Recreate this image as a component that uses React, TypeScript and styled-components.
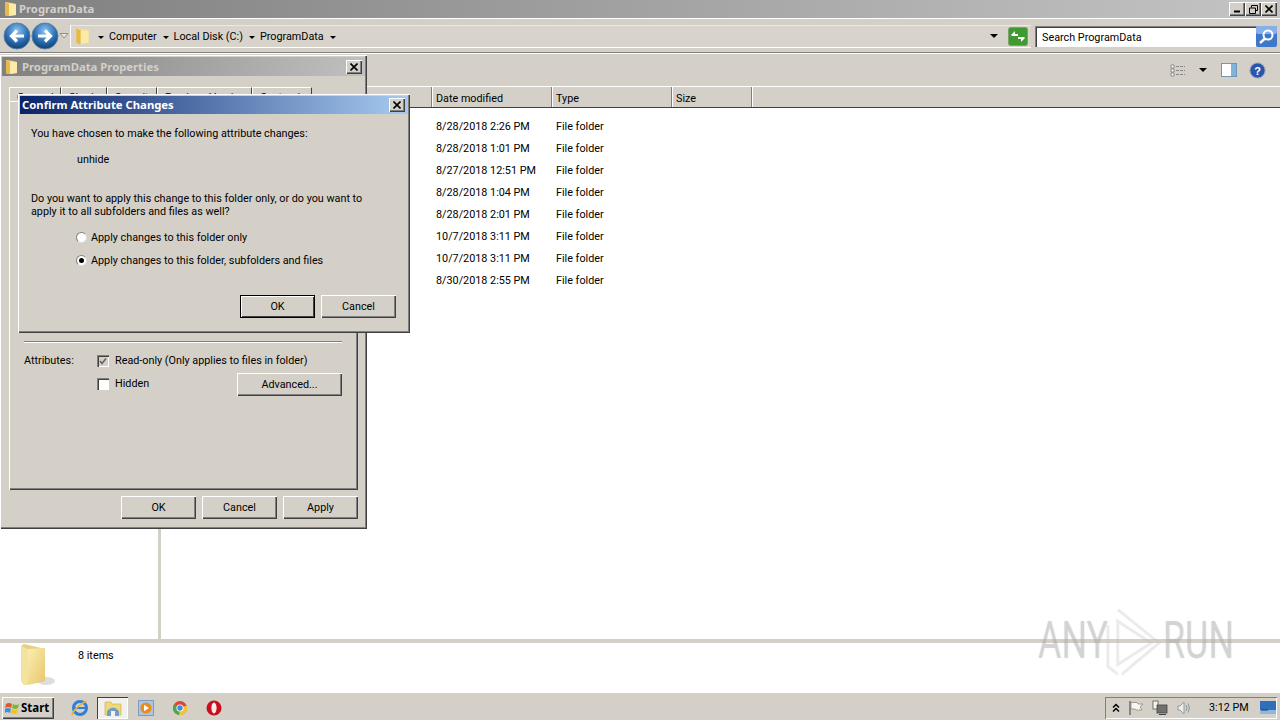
import { createGlobalStyle, css, styled } from "styled-components";

const GlobalStyle = createGlobalStyle`
  html, body {
    margin: 0;
    padding: 0;
    background: #fff;
  }
  * {
    box-sizing: border-box;
  }
`;

const face = "#d4d0c8";

const raised = css`
  background: ${face};
  box-shadow: inset 1px 1px 0 #fff, inset -1px -1px 0 #404040, inset -2px -2px 0 #808080;
`;

const sunken = css`
  box-shadow: inset 1px 1px 0 #808080, inset -1px -1px 0 #fff;
`;

const Page = styled.div`
  position: relative;
  width: 1280px;
  height: 720px;
  overflow: hidden;
  display: flex;
  flex-direction: column;
  background: #fff;
  color: #000;
  font: 10.8px/14px "Roboto", "Noto Sans", sans-serif;
`;

const TitleBar = styled.div`
  height: 18px;
  flex: none;
  display: flex;
  align-items: center;
  padding: 0 3px 0 3px;
  background: linear-gradient(90deg, #808080, #c4c4c4);
`;

const TitleText = styled.span<{ $light?: boolean }>`
  font-family: "Noto Sans", sans-serif;
  font-weight: 700;
  font-size: 11.3px;
  color: ${(p) => (p.$light ? "#fff" : face)};
  flex: 1;
  white-space: nowrap;
`;

const CaptionButton = styled.div`
  ${raised}
  width: 16px;
  height: 14px;
  display: flex;
  align-items: center;
  justify-content: center;
  flex: none;
`;

const CaptionGroup = styled.div`
  display: flex;
  align-items: center;
`;

const NavBar = styled.div`
  height: 36px;
  flex: none;
  display: flex;
  align-items: center;
  padding: 0 0 0 3px;
  background: ${face};
  border-top: 1px solid #fff;
  border-bottom: 1px solid #fff;
  box-shadow: inset 0 -1px 0 #808080;
`;

const AddressBox = styled.div`
  width: 961px;
  height: 23px;
  margin-left: 1px;
  display: flex;
  align-items: center;
  padding-left: 3px;
  background: #d8d4cc;
  border-left: 1px solid #fff;
  border-top: 1px solid #ece9e2;
  border-bottom: 1px solid #fff;
`;

const AddressFolder = styled.span`
  display: flex;
  width: 18px;
`;

const Crumb = styled.span`
  display: flex;
  align-items: center;
  gap: 5px;
  margin-left: 6px;
  padding-top: 2px;
  white-space: nowrap;
`;

const Caret = styled.span<{ $big?: boolean }>`
  width: 0;
  height: 0;
  border-left: ${(p) => (p.$big ? 4 : 3)}px solid transparent;
  border-right: ${(p) => (p.$big ? 4 : 3)}px solid transparent;
  border-top: ${(p) => (p.$big ? 4 : 3)}px solid #000;
  flex: none;
`;

const AddressEnd = styled.div`
  margin-left: auto;
  padding-right: 3px;
  display: flex;
  align-items: center;
  gap: 10px;
`;

const SearchBox = styled.div`
  width: 221px;
  height: 21px;
  margin-left: 4px;
  padding: 3px 0 0 7px;
  display: flex;
  align-items: center;
  background: #fff;
  box-shadow: inset 1px 1px 0 #808080, inset 2px 2px 0 #404040;
  white-space: nowrap;
`;

const CommandBar = styled.div`
  height: 32px;
  flex: none;
  display: flex;
  align-items: center;
  justify-content: flex-end;
  padding-right: 14px;
  background: ${face};
`;

const CommandItem = styled.span<{ $gap: number }>`
  display: flex;
  margin-left: ${(p) => p.$gap}px;
`;

const HeaderRow = styled.div`
  height: 22px;
  flex: none;
  display: grid;
  grid-template-columns: 161px 270px 120px 120px 80px 1fr;
  background: ${face};
  border-top: 1px solid #fff;
  border-bottom: 1px solid #404040;
`;

const HeaderCell = styled.div`
  display: flex;
  align-items: center;
  padding: 4px 0 0 4px;
  border-left: 1px solid #808080;
  box-shadow: inset 1px 0 0 #fff;
`;

const Panes = styled.div`
  flex: 1;
  min-height: 0;
  display: flex;
`;

const TreePane = styled.div`
  width: 161px;
  flex: none;
  background: #fff;
  border-right: 3px solid ${face};
`;

const FileList = styled.div`
  flex: 1;
  display: flex;
  flex-direction: column;
  padding-top: 7px;
`;

const FileRow = styled.div`
  height: 22px;
  padding-top: 2px;
  display: grid;
  grid-template-columns: 275px 120px 1fr;
  align-items: center;
`;

const StatusBar = styled.div`
  height: 53px;
  flex: none;
  display: flex;
  padding: 0 0 0 18px;
  background: #fff;
  border-top: 4px solid ${face};
`;

const StatusText = styled.span`
  margin: 6px 0 0 20px;
`;

const Taskbar = styled.div`
  height: 28px;
  flex: none;
  display: flex;
  align-items: center;
  padding: 2px 3px 0 2px;
  background: ${face};
  border-top: 1px solid #fff;
`;

const StartButton = styled.div`
  ${raised}
  width: 52px;
  height: 22px;
  display: flex;
  align-items: center;
  padding-left: 3px;
  gap: 1px;
  font-family: "Noto Sans", sans-serif;
  font-weight: 700;
  font-size: 11.5px;
`;

const TaskIcons = styled.div`
  margin-left: 8px;
  display: flex;
  align-items: center;
`;

const TaskSlot = styled.div<{ $active?: boolean; $w?: number }>`
  width: ${(p) => p.$w ?? 32}px;
  height: 22px;
  margin-left: 2px;
  display: flex;
  align-items: center;
  justify-content: center;
  ${(p) =>
    p.$active &&
    css`
      background: #f2f0ec;
      box-shadow: inset 1px 1px 0 #404040, inset -1px -1px 0 #fff;
    `}
`;

const Tray = styled.div`
  margin-left: auto;
  width: 172px;
  height: 22px;
  display: flex;
  align-items: center;
  padding: 0 1px 0 7px;
  ${sunken}
`;

const TrayIcons = styled.div`
  display: flex;
  align-items: center;
  gap: 8px;
`;

const Clock = styled.span`
  margin-left: 17px;
  white-space: nowrap;
`;

const DesktopSlot = styled.span`
  margin-left: auto;
  display: flex;
`;

const Dialog = styled.div<{ $x: number; $y: number; $w: number; $h: number }>`
  position: absolute;
  left: ${(p) => p.$x}px;
  top: ${(p) => p.$y}px;
  width: ${(p) => p.$w}px;
  height: ${(p) => p.$h}px;
  padding: 2px;
  display: flex;
  flex-direction: column;
  background: ${face};
  box-shadow: inset 1px 1px 0 #fff, inset -1px -1px 0 #404040, inset -2px -2px 0 #808080;
`;

const DialogTitle = styled.div<{ $active?: boolean; $h: number }>`
  height: ${(p) => p.$h}px;
  flex: none;
  display: flex;
  align-items: center;
  padding: 0 3px 0 2px;
  gap: 2px;
  background: ${(p) =>
    p.$active
      ? "linear-gradient(90deg, #0a246a, #a6caf0)"
      : "linear-gradient(90deg, #808080, #c0c0c0)"};
`;

const Tabs = styled.div`
  display: flex;
  margin: 11px 0 0 7px;
  height: 20px;
  flex: none;
`;

const Tab = styled.div<{ $w: number }>`
  width: ${(p) => p.$w}px;
  padding: 3px 0 0 7px;
  white-space: nowrap;
  border-top: 1px solid #fff;
  border-left: 1px solid #fff;
  border-right: 1px solid #404040;
`;

const TabPanel = styled.div`
  height: 389px;
  margin: -6px 7px 0 7px;
  display: flex;
  flex-direction: column;
  justify-content: flex-end;
  padding: 0 16px 95px 15px;
  box-shadow: inset 1px 1px 0 #fff, inset -1px -1px 0 #404040, inset -2px -2px 0 #808080;
`;

const Rule = styled.div`
  height: 2px;
  border-top: 1px solid #808080;
  border-bottom: 1px solid #fff;
  margin-bottom: 6px;
`;

const AttrGrid = styled.div`
  display: grid;
  grid-template-columns: 73px 1fr;
  grid-auto-rows: 23px;
  align-items: center;
`;

const AttrLine = styled.div`
  display: flex;
  align-items: center;
  gap: 6px;
  white-space: nowrap;
`;

const CheckBox = styled.span<{ $checked?: boolean }>`
  width: 12px;
  height: 12px;
  flex: none;
  display: flex;
  align-items: center;
  justify-content: center;
  background: ${(p) => (p.$checked ? face : "#fff")};
  box-shadow: inset 1px 1px 0 #808080, inset 2px 2px 0 #404040, inset -1px -1px 0 #fff;
`;

const PushButton = styled.div<{ $w?: number; $default?: boolean }>`
  ${raised}
  width: ${(p) => p.$w ?? 75}px;
  height: 23px;
  display: flex;
  align-items: center;
  justify-content: center;
  flex: none;
  ${(p) =>
    p.$default &&
    css`
      outline: 1px solid #000;
      outline-offset: -1px;
      box-shadow: inset 2px 2px 0 #fff, inset -2px -2px 0 #404040;
    `}
`;

const AdvancedButton = styled(PushButton)`
  margin: 2px 0 0 auto;
`;

const DialogButtons = styled.div`
  display: flex;
  justify-content: flex-end;
  gap: 6px;
  margin-top: 6px;
  padding-right: 7px;
`;

const ConfirmBody = styled.div`
  flex: 1;
  display: flex;
  flex-direction: column;
  padding: 13px 12px 0 11px;
`;

const Para = styled.p<{ $indent?: number; $top?: number }>`
  margin: ${(p) => p.$top ?? 0}px 0 0 ${(p) => p.$indent ?? 0}px;
  line-height: 13px;
  white-space: nowrap;
`;

const RadioLine = styled.div<{ $top: number }>`
  display: flex;
  align-items: center;
  gap: 4px;
  margin: ${(p) => p.$top}px 0 0 45px;
  white-space: nowrap;
`;

const Radio = styled.span<{ $on?: boolean }>`
  width: 11px;
  height: 11px;
  margin-top: -2px;
  flex: none;
  border-radius: 50%;
  background: #fff;
  border: 1px solid #808080;
  border-right-color: #ddd;
  border-bottom-color: #ddd;
  display: flex;
  align-items: center;
  justify-content: center;
  &::after {
    content: "";
    width: 5px;
    height: 5px;
    border-radius: 50%;
    background: ${(p) => (p.$on ? "#000" : "transparent")};
  }
`;

const ConfirmButtons = styled.div`
  display: flex;
  justify-content: flex-end;
  gap: 6px;
  margin-top: 27px;
`;

const Watermark = styled.div`
  position: absolute;
  left: 1038px;
  top: 606px;
  width: 192px;
  height: 70px;
  display: flex;
  align-items: center;
  justify-content: space-between;
  font: 400 52px/1 "Roboto", sans-serif;
  color: rgba(190, 190, 190, 0.26);
  pointer-events: none;
`;

const WaterWord = styled.span<{ $w: number }>`
  display: inline-block;
  width: ${(p) => p.$w}px;
  transform: scaleX(0.69);
  transform-origin: left center;
  white-space: nowrap;
  text-shadow: 0 0 1px rgba(150, 150, 150, 0.35);
`;

const Folder = ({ size = 16 }: { size?: number }) => (
  <svg width={size} height={size} viewBox="0 0 16 16">
    <path d="M2 1 L9 2 L13 3 L13 14 L4 15 L2 14Z" fill="#f6dc8a" />
    <path d="M2 1 L6 3 L6 15 L4 15 L2 14Z" fill="#e6b94a" />
    <path d="M6 3 L13 3 L13 14 L6 15Z" fill="#fbeaa8" />
  </svg>
);

const BigFolder = () => (
  <svg width="40" height="48" viewBox="0 0 40 48">
    <defs>
      <linearGradient id="fold" x1="0" x2="1" y1="0" y2="1">
        <stop offset="0" stopColor="#fbeeb0" />
        <stop offset="1" stopColor="#e7c66c" />
      </linearGradient>
    </defs>
    <ellipse cx="28" cy="38" rx="9" ry="4" fill="#ddd" />
    <path d="M3 3 L6 1 L27 6 L27 38 L6 42 L3 38Z" fill="#e9cf7c" />
    <path d="M10 6 L27 5 L27 38 L10 42Z" fill="url(#fold)" />
    <path d="M3 3 L10 6 L10 42 L6 42 L3 38Z" fill="#f4e2a0" />
  </svg>
);

const CloseGlyph = () => (
  <svg width="8" height="8" viewBox="0 0 8 8">
    <path d="M0.5 0.5 L7.5 7.5 M7.5 0.5 L0.5 7.5" stroke="#000" strokeWidth="1.6" />
  </svg>
);

const NavArrow = ({ left }: { left?: boolean }) => (
  <svg width="28" height="28" viewBox="0 0 28 28">
    <defs>
      <radialGradient id={left ? "navl" : "navr"} cx="50%" cy="30%" r="70%">
        <stop offset="0" stopColor="#8fc4ee" />
        <stop offset="0.6" stopColor="#2a6fb6" />
        <stop offset="1" stopColor="#10406f" />
      </radialGradient>
    </defs>
    <circle cx="14" cy="14" r="13" fill={`url(#${left ? "navl" : "navr"})`} stroke="#5b7f9f" />
    <path
      d={left ? "M21 14 H9 M14 8.5 L8.5 14 L14 19.5" : "M7 14 H19 M14 8.5 L19.5 14 L14 19.5"}
      fill="none"
      stroke="#fff"
      strokeWidth="3.2"
    />
  </svg>
);

const Refresh = () => (
  <svg width="20" height="19" viewBox="0 0 20 19">
    <rect x="0.5" y="0.5" width="19" height="18" rx="2" fill="#3f9b2f" stroke="#7f9f6f" />
    <path d="M3 8 L7 4 L7 7 H10 V9 H4Z M17 11 L13 15 L13 12 H10 V10 H16Z" fill="#fff" />
  </svg>
);

const SearchIcon = () => (
  <svg width="21" height="21" viewBox="0 0 21 21">
    <rect width="21" height="21" rx="2" fill="#3f78c8" />
    <rect width="21" height="8" rx="2" fill="#86b0ea" />
    <circle cx="12" cy="9" r="4.5" fill="none" stroke="#fff" strokeWidth="2" />
    <path d="M9 12.5 L4 17" stroke="#fff" strokeWidth="2.4" />
  </svg>
);

const ViewsIcon = () => (
  <svg width="16" height="13" viewBox="0 0 16 13">
    <path d="M1 1h3v3H1z M1 5h3v3H1z M1 9h3v3H1z" fill="#fff" stroke="#777" strokeWidth="0.8" />
    <path d="M6 2.5h9 M6 6.5h9 M6 10.5h9" stroke="#888" strokeDasharray="3 1" />
  </svg>
);

const PreviewIcon = () => (
  <svg width="16" height="14" viewBox="0 0 16 14">
    <rect x="0.5" y="0.5" width="15" height="13" fill="#fff" stroke="#6f96b8" />
    <rect x="10" y="1" width="5" height="12" fill="#7fb4d8" />
  </svg>
);

const HelpIcon = () => (
  <svg width="17" height="17" viewBox="0 0 17 17">
    <circle cx="8.5" cy="8.5" r="7.6" fill="#2a55ad" stroke="#9aa5bd" />
    <text x="8.5" y="12.5" textAnchor="middle" fontSize="11" fontWeight="700" fontFamily="Liberation Sans" fill="#fff">
      ?
    </text>
  </svg>
);

const WinFlag = () => (
  <svg width="15" height="14" viewBox="0 0 15 14">
    <path d="M1 3 Q4 1 7 3 L6 7 Q3 5 0 7Z" fill="#e2562c" />
    <path d="M8 3 Q11 5 14 3 L13 7 Q10 9 7 7Z" fill="#7cb82f" />
    <path d="M0 8 Q3 6 6 8 L5 12 Q2 10 0 12Z" fill="#3f8fdc" />
    <path d="M7 8 Q10 10 13 8 L12 12 Q9 14 6 12Z" fill="#f2c31e" />
  </svg>
);

const IeIcon = () => (
  <svg width="18" height="18" viewBox="0 0 18 18">
    <circle cx="9" cy="9" r="6.5" fill="none" stroke="#2f7fd6" strokeWidth="3" />
    <path d="M3 9 H15" stroke="#2f7fd6" strokeWidth="2" />
    <path d="M1 16 Q2 10 15 2" fill="none" stroke="#e3b23a" strokeWidth="1.6" />
  </svg>
);

const ExplorerIcon = () => (
  <svg width="20" height="18" viewBox="0 0 20 18">
    <path d="M2 3 H8 L9 5 H18 V16 H2Z" fill="#f0d77c" stroke="#c4a84f" strokeWidth="0.6" />
    <path d="M4 12 Q10 5 16 12 V17 H4Z" fill="#6f9fc4" />
    <rect x="8" y="12" width="4" height="5" fill="#f4f4f4" />
  </svg>
);

const PlayerIcon = () => (
  <svg width="16" height="16" viewBox="0 0 16 16">
    <rect x="0.5" y="0.5" width="15" height="15" fill="#a9c6e6" stroke="#7f9cc0" />
    <circle cx="8" cy="8" r="5.6" fill="#ee8a1c" />
    <path d="M6 4.8 L11 8 L6 11.2Z" fill="#fff" />
  </svg>
);

const ChromeIcon = () => (
  <svg width="16" height="16" viewBox="0 0 16 16">
    <circle cx="8" cy="8" r="7" fill="#d84a38" />
    <path d="M8 8 L2 4.5 A7 7 0 0 0 7 15Z" fill="#4aa84f" />
    <path d="M8 8 L7 15 A7 7 0 0 0 14.8 5.6Z" fill="#f3c52f" />
    <circle cx="8" cy="8" r="3.6" fill="#fff" />
    <circle cx="8" cy="8" r="2.7" fill="#4a86d8" />
  </svg>
);

const OperaIcon = () => (
  <svg width="16" height="16" viewBox="0 0 16 16">
    <circle cx="8" cy="8" r="7.5" fill="#c8101c" />
    <ellipse cx="8" cy="8" rx="2.6" ry="5.4" fill="#fbeaea" />
  </svg>
);

const Chevrons = () => (
  <svg width="8" height="10" viewBox="0 0 8 10">
    <path d="M1 4.5 L4 1.5 L7 4.5 M1 8.5 L4 5.5 L7 8.5" fill="none" stroke="#000" strokeWidth="1.5" />
  </svg>
);

const FlagTray = () => (
  <svg width="16" height="16" viewBox="0 0 16 16">
    <path d="M2 1 V15" stroke="#555" strokeWidth="1.2" />
    <path d="M3 2.5 H9 L10 4 H15 L12 7 L14 10 H8 L7 9 H3Z" fill="#f6f6f2" stroke="#8a8a84" strokeWidth="0.8" />
  </svg>
);

const NetworkTray = () => (
  <svg width="16" height="16" viewBox="0 0 16 16">
    <rect x="1" y="1" width="5" height="8" fill="#f4f4f0" stroke="#555" strokeWidth="0.8" />
    <rect x="5" y="5" width="10" height="8" fill="#707070" stroke="#444" strokeWidth="0.8" />
    <path d="M7 14.5 H14" stroke="#444" />
  </svg>
);

const SpeakerTray = () => (
  <svg width="16" height="16" viewBox="0 0 16 16">
    <path d="M2 6 H4 L8 2 V14 L4 10 H2Z" fill="#eeeeea" stroke="#888" strokeWidth="0.8" />
    <path d="M10 5 Q12 8 10 11 M12 3.5 Q15 8 12 12.5" fill="none" stroke="#8a98a8" />
  </svg>
);

const ShowDesktop = () => (
  <svg width="16" height="13" viewBox="0 0 16 13">
    <rect width="16" height="13" fill="#2f6fb8" />
    <rect y="9" width="16" height="4" fill="#8fb6de" />
    <path d="M1 9 H8" stroke="#1a3f70" />
  </svg>
);

const PlayMark = () => (
  <svg width="60" height="76" viewBox="0 0 60 76" fill="none" stroke="rgba(190,190,190,0.3)" strokeWidth="3">
    <path d="M14 18 L14 62 L48 40Z M4 22 L4 64 L14 72 M14 6 L56 40 L18 72" />
  </svg>
);

const files = [
  ["8/28/2018 2:26 PM", "File folder"],
  ["8/28/2018 1:01 PM", "File folder"],
  ["8/27/2018 12:51 PM", "File folder"],
  ["8/28/2018 1:04 PM", "File folder"],
  ["8/28/2018 2:01 PM", "File folder"],
  ["10/7/2018 3:11 PM", "File folder"],
  ["10/7/2018 3:11 PM", "File folder"],
  ["8/30/2018 2:55 PM", "File folder"],
];

export default function App() {
  return (
    <Page>
      <GlobalStyle />
      <TitleBar>
        <Folder />
        <TitleText>ProgramData</TitleText>
        <CaptionGroup>
          <CaptionButton>
            <svg width="8" height="8" viewBox="0 0 8 8">
              <path d="M1 6.5 H7" stroke="#000" strokeWidth="2" />
            </svg>
          </CaptionButton>
          <CaptionButton>
            <svg width="9" height="9" viewBox="0 0 9 9" fill="none" stroke="#000">
              <path d="M2.5 2.5 V0.5 H8.5 V5.5 H6.5 M0.5 3 H6.5 V8.5 H0.5Z" />
            </svg>
          </CaptionButton>
          <CaptionButton>
            <CloseGlyph />
          </CaptionButton>
        </CaptionGroup>
      </TitleBar>
      <NavBar>
        <NavArrow left />
        <NavArrow />
        <svg width="10" height="8" viewBox="0 0 10 8">
          <path d="M1 1.5 L5 6 L9 1.5Z" fill="#e8e6e0" stroke="#8f8f8a" />
        </svg>
        <AddressBox>
          <AddressFolder>
            <Folder size={20} />
          </AddressFolder>
          <Crumb>
            <Caret />
            Computer
          </Crumb>
          <Crumb>
            <Caret />
            Local Disk (C:)
          </Crumb>
          <Crumb>
            <Caret />
            ProgramData
          </Crumb>
          <Crumb>
            <Caret />
          </Crumb>
          <AddressEnd>
            <Caret $big />
            <Refresh />
          </AddressEnd>
        </AddressBox>
        <SearchBox>Search ProgramData</SearchBox>
        <SearchIcon />
      </NavBar>
      <CommandBar>
        <ViewsIcon />
        <CommandItem $gap={13}>
          <Caret $big />
        </CommandItem>
        <CommandItem $gap={14}>
          <PreviewIcon />
        </CommandItem>
        <CommandItem $gap={12}>
          <HelpIcon />
        </CommandItem>
      </CommandBar>
      <HeaderRow>
        <span />
        <HeaderCell>Name</HeaderCell>
        <HeaderCell>Date modified</HeaderCell>
        <HeaderCell>Type</HeaderCell>
        <HeaderCell>Size</HeaderCell>
        <HeaderCell />
      </HeaderRow>
      <Panes>
        <TreePane />
        <FileList>
          {files.map(([date, type], i) => (
            <FileRow key={i}>
              <span />
              <span>{date}</span>
              <span>{type}</span>
            </FileRow>
          ))}
        </FileList>
      </Panes>
      <StatusBar>
        <BigFolder />
        <StatusText>8 items</StatusText>
      </StatusBar>
      <Taskbar>
        <StartButton>
          <WinFlag />
          Start
        </StartButton>
        <TaskIcons>
          <TaskSlot $w={31}>
            <IeIcon />
          </TaskSlot>
          <TaskSlot $active $w={31}>
            <ExplorerIcon />
          </TaskSlot>
          <TaskSlot>
            <PlayerIcon />
          </TaskSlot>
          <TaskSlot>
            <ChromeIcon />
          </TaskSlot>
          <TaskSlot>
            <OperaIcon />
          </TaskSlot>
        </TaskIcons>
        <Tray>
          <TrayIcons>
            <Chevrons />
            <FlagTray />
            <NetworkTray />
            <SpeakerTray />
          </TrayIcons>
          <Clock>3:12 PM</Clock>
          <DesktopSlot>
            <ShowDesktop />
          </DesktopSlot>
        </Tray>
      </Taskbar>

      <Watermark>
        <WaterWord $w={66}>ANY</WaterWord>
        <PlayMark />
        <WaterWord $w={67}>RUN</WaterWord>
      </Watermark>

      <Dialog $x={0} $y={55} $w={367} $h={474}>
        <DialogTitle $h={19}>
          <Folder />
          <TitleText>ProgramData Properties</TitleText>
          <CaptionButton>
            <CloseGlyph />
          </CaptionButton>
        </DialogTitle>
        <Tabs>
          <Tab $w={52}>General</Tab>
          <Tab $w={46}>Sharing</Tab>
          <Tab $w={50}>Security</Tab>
          <Tab $w={95}>Previous Versions</Tab>
          <Tab $w={60}>Customize</Tab>
        </Tabs>
        <TabPanel>
          <Rule />
          <AttrGrid>
            <span>Attributes:</span>
            <AttrLine>
              <CheckBox $checked>
                <svg width="8" height="8" viewBox="0 0 8 8">
                  <path d="M1 4 L3 6.5 L7 1.5" fill="none" stroke="#666" strokeWidth="1.6" />
                </svg>
              </CheckBox>
              Read-only (Only applies to files in folder)
            </AttrLine>
            <span />
            <AttrLine>
              <CheckBox />
              Hidden
              <AdvancedButton $w={105}>Advanced...</AdvancedButton>
            </AttrLine>
          </AttrGrid>
        </TabPanel>
        <DialogButtons>
          <PushButton>OK</PushButton>
          <PushButton>Cancel</PushButton>
          <PushButton>Apply</PushButton>
        </DialogButtons>
      </Dialog>

      <Dialog $x={18} $y={94} $w={392} $h={239}>
        <DialogTitle $active $h={18}>
          <TitleText $light>Confirm Attribute Changes</TitleText>
          <CaptionButton>
            <CloseGlyph />
          </CaptionButton>
        </DialogTitle>
        <ConfirmBody>
          <Para>You have chosen to make the following attribute changes:</Para>
          <Para $indent={46} $top={13}>
            unhide
          </Para>
          <Para $top={26}>Do you want to apply this change to this folder only, or do you want to</Para>
          <Para>apply it to all subfolders and files as well?</Para>
          <RadioLine $top={13}>
            <Radio />
            Apply changes to this folder only
          </RadioLine>
          <RadioLine $top={9}>
            <Radio $on />
            Apply changes to this folder, subfolders and files
          </RadioLine>
          <ConfirmButtons>
            <PushButton $default>OK</PushButton>
            <PushButton>Cancel</PushButton>
          </ConfirmButtons>
        </ConfirmBody>
      </Dialog>
    </Page>
  );
}
